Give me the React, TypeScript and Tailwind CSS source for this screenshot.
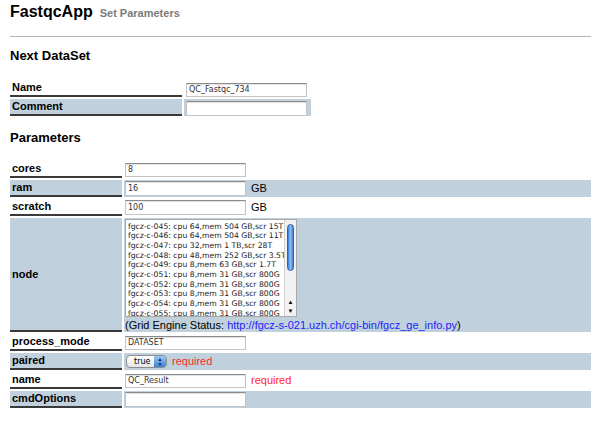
import { ReactNode } from 'react';

const BLUE = 'bg-[#c0d1dd]';

const NODES = [
  'fgcz-c-045: cpu 64,mem 504 GB,scr 15T',
  'fgcz-c-046: cpu 64,mem 504 GB,scr 11T',
  'fgcz-c-047: cpu 32,mem 1 TB,scr 28T',
  'fgcz-c-048: cpu 48,mem 252 GB,scr 3.5T',
  'fgcz-c-049: cpu 8,mem 63 GB,scr 1.7T',
  'fgcz-c-051: cpu 8,mem 31 GB,scr 800G',
  'fgcz-c-052: cpu 8,mem 31 GB,scr 800G',
  'fgcz-c-053: cpu 8,mem 31 GB,scr 800G',
  'fgcz-c-054: cpu 8,mem 31 GB,scr 800G',
  'fgcz-c-055: cpu 8,mem 31 GB,scr 800G',
];

interface RowProps {
  label: string;
  shaded?: boolean;
  labelWidth: string;
  height?: string;
  children?: ReactNode;
}

function Row({ label, shaded, labelWidth, height = 'h-[17px]', children }: RowProps) {
  const bg = shaded ? BLUE : 'bg-white';
  return (
    <div className={`flex gap-[2px] ${height}`}>
      <div
        className={`${labelWidth} ${bg} shrink-0 flex items-center pl-[2px] font-bold border-b-2 border-[#3a3a3a]`}
      >
        {label}
      </div>
      <div className={`flex-1 ${bg} flex items-center pl-[1px]`}>{children}</div>
    </div>
  );
}

function TextBox({ value = '', tall }: { value?: string; tall?: boolean }) {
  return (
    <input
      readOnly
      value={value}
      className={`${tall ? 'h-[15px]' : 'h-[14px]'} w-[121px] bg-white border border-[#c4c4c4] border-t-[#8c8c8c] shadow-[inset_0_1px_1px_rgba(0,0,0,0.12)] px-[2px] text-[8px] text-[#333] font-['DejaVu_Sans',sans-serif] outline-none`}
    />
  );
}

function Unit({ children, red }: { children: ReactNode; red?: boolean }) {
  return <span className={`ml-[5px] text-[11px] ${red ? 'text-[#ff2626]' : 'text-black'}`}>{children}</span>;
}

function NodeList() {
  return (
    <div className="flex flex-col items-start">
      <div className="relative w-[172px] h-[98px] bg-white border border-[#a8a8a8] overflow-hidden">
        <div className="pl-[2px] pt-[2px] font-['DejaVu_Sans',sans-serif] text-[7.7px] leading-[9.7px] text-[#222] whitespace-nowrap">
          {NODES.map((n) => (
            <div key={n}>{n}</div>
          ))}
        </div>
        <div className="absolute right-0 top-0 bottom-0 w-[12px] bg-[#f2f2f2] border-l border-[#d0d0d0] flex flex-col">
          <div className="mx-[2px] mt-[4px] h-[47px] rounded-full bg-gradient-to-r from-[#3d7fd6] via-[#8cc0f2] to-[#3d7fd6] border border-[#2d62ad]" />
          <div className="flex-1" />
          <div className="h-[9px] flex items-center justify-center text-[6px] leading-none text-black">▲</div>
          <div className="h-[9px] flex items-center justify-center text-[6px] leading-none text-black">▼</div>
        </div>
      </div>
      <div className="text-[11px] leading-[14px] mt-[1px] whitespace-nowrap">
        (Grid Engine Status:{' '}
        <a className="text-[#1f1fff]" href="#">
          http://fgcz-s-021.uzh.ch/cgi-bin/fgcz_ge_info.py
        </a>
        )
      </div>
    </div>
  );
}

function PairedSelect() {
  return (
    <div className="ml-[1px] flex h-[13px] w-[41px] rounded-[4px] border border-[#8d8d8d] overflow-hidden bg-gradient-to-b from-white to-[#e4e4e4]">
      <span className="flex-1 pl-[7px] text-[8px] leading-[11px] font-['DejaVu_Sans',sans-serif]">true</span>
      <span className="w-[12px] bg-gradient-to-b from-[#9cc8f4] to-[#3d80d8] flex flex-col items-center justify-center text-[5px] leading-[5px] text-[#123]">
        <span>▲</span>
        <span>▼</span>
      </span>
    </div>
  );
}

export default function App() {
  const W1 = 'w-[172px]';
  const W2 = 'w-[112px]';
  return (
    <div className="w-[601px] h-[422px] overflow-hidden bg-white px-[10px] font-['Liberation_Sans',Arial,sans-serif] text-[11px] text-black">
      <div className="pt-[2px] flex items-baseline gap-[7px] h-[22px]">
        <span className="text-[16px] leading-[20px] font-bold">FastqcApp</span>
        <span className="text-[11px] font-bold text-[#7a7a7a]">Set Parameters</span>
      </div>
      <div className="mt-[14px] h-px bg-[#b5b5b5]" />

      <div className="mt-[11px] text-[13px] leading-[16px] font-bold">Next DataSet</div>
      <div className="mt-[16px] w-[301px] flex flex-col gap-[2px]">
        <Row label="Name" labelWidth={W1}>
          <span className="pl-[1px]">
            <TextBox value="QC_Fastqc_734" />
          </span>
        </Row>
        <Row label="Comment" shaded labelWidth={W1}>
          <span className="pl-[1px]">
            <TextBox tall />
          </span>
        </Row>
      </div>

      <div className="mt-[14px] text-[13px] leading-[16px] font-bold">Parameters</div>
      <div className="mt-[15px] flex flex-col gap-[2px]">
        <Row label="cores" labelWidth={W2}>
          <TextBox value="8" />
        </Row>
        <Row label="ram" shaded labelWidth={W2}>
          <TextBox value="16" tall />
          <Unit>GB</Unit>
        </Row>
        <Row label="scratch" labelWidth={W2}>
          <TextBox value="100" tall />
          <Unit>GB</Unit>
        </Row>
        <Row label="node" shaded labelWidth={W2} height="h-[114px]">
          <NodeList />
        </Row>
        <Row label="process_mode" labelWidth={W2}>
          <TextBox value="DATASET" />
        </Row>
        <Row label="paired" shaded labelWidth={W2}>
          <PairedSelect />
          <Unit red>required</Unit>
        </Row>
        <Row label="name" labelWidth={W2}>
          <TextBox value="QC_Result" />
          <Unit red>required</Unit>
        </Row>
        <Row label="cmdOptions" shaded labelWidth={W2}>
          <TextBox tall />
        </Row>
      </div>
    </div>
  );
}
